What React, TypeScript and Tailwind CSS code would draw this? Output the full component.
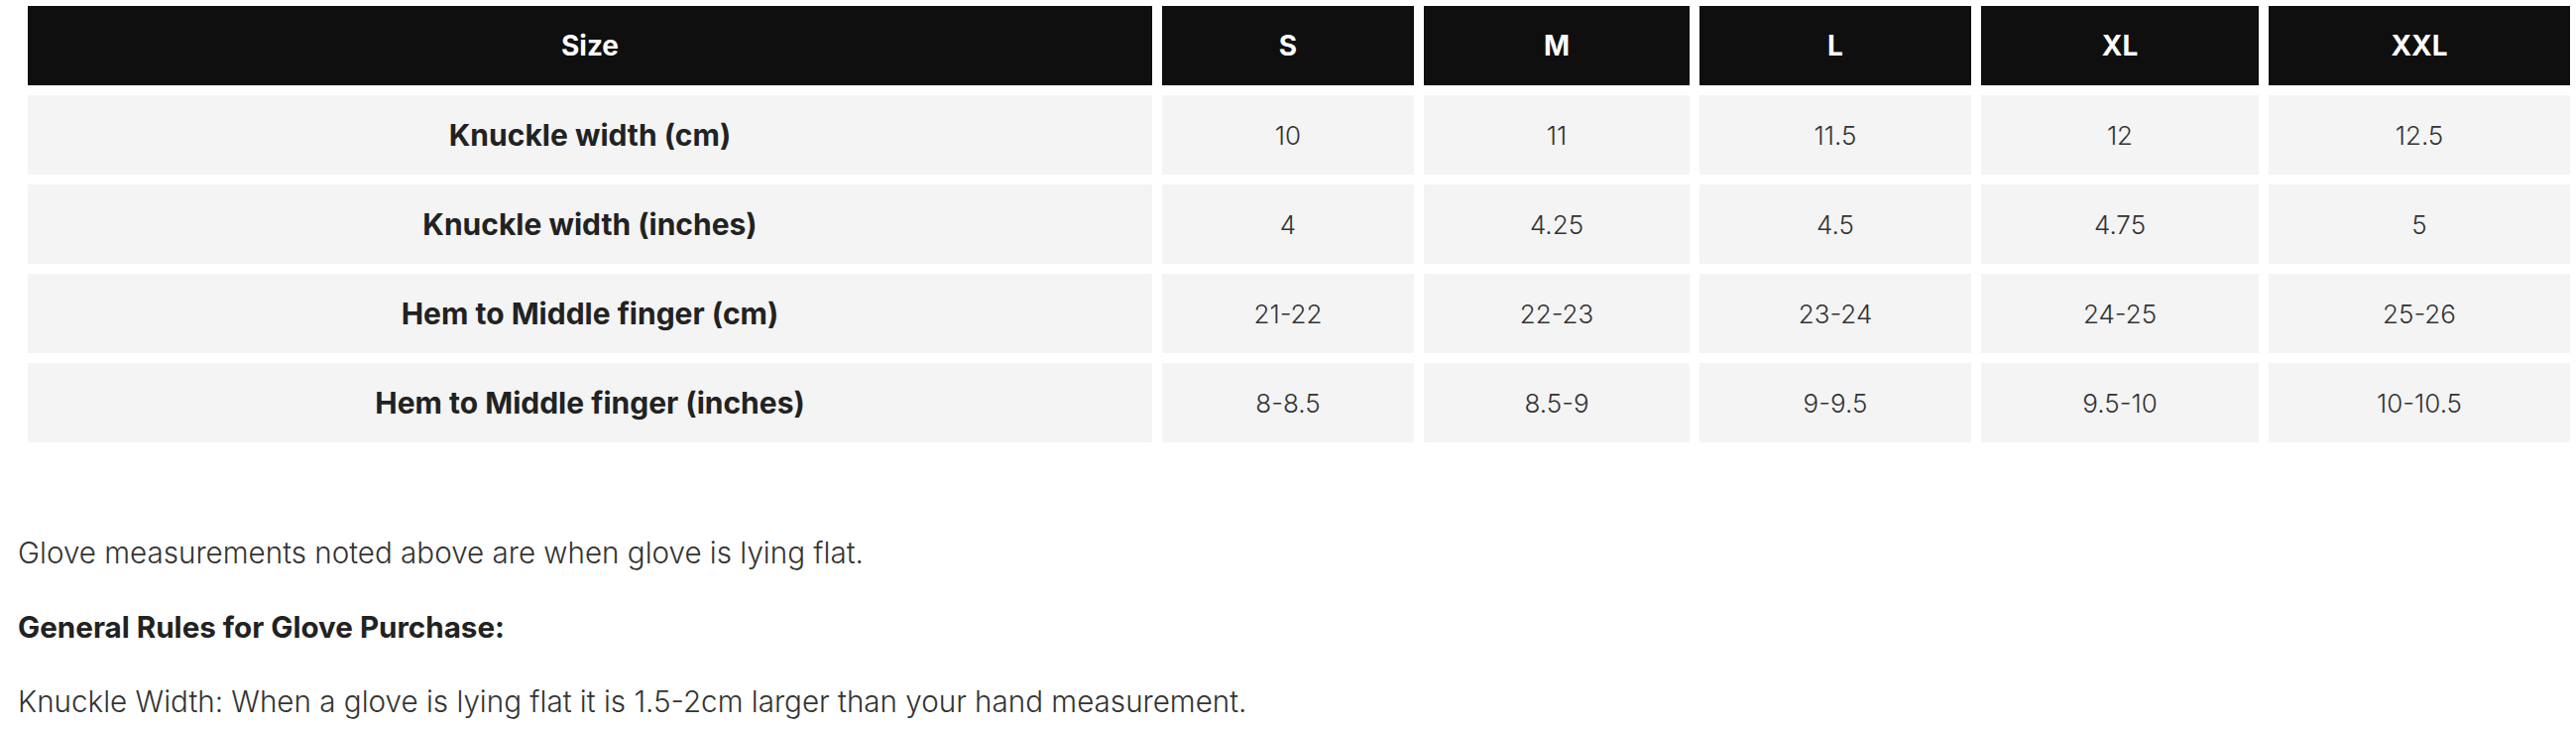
const sizes = ['S', 'M', 'L', 'XL', 'XXL'];

const rows: { label: string; values: string[] }[] = [
  { label: 'Knuckle width (cm)', values: ['10', '11', '11.5', '12', '12.5'] },
  { label: 'Knuckle width (inches)', values: ['4', '4.25', '4.5', '4.75', '5'] },
  { label: 'Hem to Middle finger (cm)', values: ['21-22', '22-23', '23-24', '24-25', '25-26'] },
  { label: 'Hem to Middle finger (inches)', values: ['8-8.5', '8.5-9', '9-9.5', '9.5-10', '10-10.5'] },
];

const App: React.FC = () => {
  return (
    <div className="min-h-screen bg-white font-['Inter',_'Liberation_Sans',_sans-serif] text-[#222]">
      {/* Size chart */}
      <div className="pl-[28px] pt-[6px]">
        <div className="grid grid-cols-[1134px_254px_268px_274px_280px_304px] gap-[10px]">
          <div className="flex h-[80px] items-center justify-center bg-[#0f0f0f] text-[28px] font-bold text-white">
            Size
          </div>
          {sizes.map((s) => (
            <div
              key={s}
              className="flex h-[80px] items-center justify-center bg-[#0f0f0f] text-[28px] font-bold text-white"
            >
              {s}
            </div>
          ))}
          {rows.map((row) => (
            <>
              <div
                key={row.label}
                className="flex h-[80px] items-center justify-center bg-[#f4f4f4] text-[30px] font-bold text-[#222]"
              >
                {row.label}
              </div>
              {row.values.map((v, i) => (
                <div
                  key={row.label + i}
                  className="flex h-[80px] items-center justify-center bg-[#f4f4f4] text-[26px] font-light text-[#333]"
                >
                  {v}
                </div>
              ))}
            </>
          ))}
        </div>
      </div>
      {/* Notes */}
      <div className="mt-[91px] flex flex-col gap-[35px] pl-[18px] text-[29.6px] leading-[40px] font-light text-[#333]">
        <p>Glove measurements noted above are when glove is lying flat.</p>
        <p className="font-bold text-[#222]">General Rules for Glove Purchase:</p>
        <p>Knuckle Width: When a glove is lying flat it is 1.5-2cm larger than your hand measurement.</p>
      </div>
    </div>
  );
};

export default App;
